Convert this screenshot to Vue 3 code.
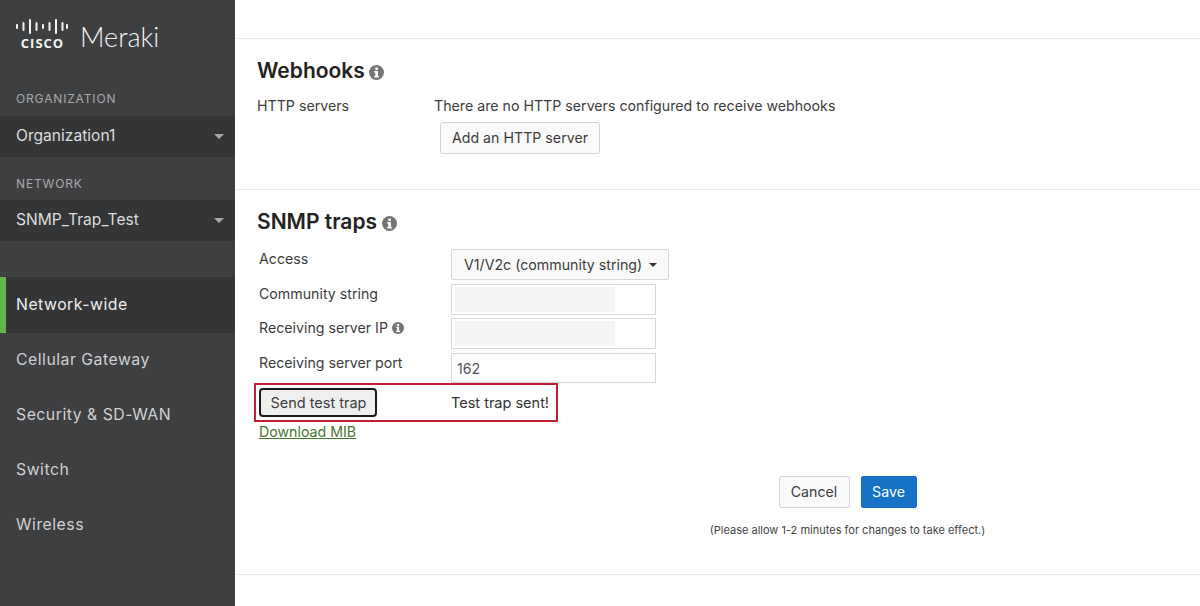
<script setup>
const navItems = ['Network-wide', 'Cellular Gateway', 'Security & SD-WAN', 'Switch', 'Wireless']
const ciscoBars = [
  { x: 0, h: 5 }, { x: 6.5, h: 9 }, { x: 13, h: 15 }, { x: 19.5, h: 9 }, { x: 26, h: 5 },
  { x: 32.5, h: 9 }, { x: 39, h: 15 }, { x: 45.5, h: 9 }, { x: 50, h: 5 }
]
</script>

<template>
  <div class="page">
    <aside class="sidebar">
      <div class="logo">
        <div class="cisco">
          <svg width="53" height="15" viewBox="0 0 53 15" class="bars">
            <rect
              v-for="bar in ciscoBars"
              :key="bar.x"
              :x="bar.x"
              :y="(15 - bar.h) / 2"
              width="2"
              :height="bar.h"
              rx="1"
              fill="#f2f2f2"
            />
          </svg>
          <span class="cisco-word">CISCO</span>
        </div>
        <span class="meraki">Meraki</span>
      </div>

      <div class="side-label org-label">ORGANIZATION</div>
      <div class="picker">Organization1<i class="picker-caret"></i></div>
      <div class="side-label net-label">NETWORK</div>
      <div class="picker">SNMP_Trap_Test<i class="picker-caret"></i></div>

      <nav class="nav">
        <div
          v-for="(item, i) in navItems"
          :key="item"
          class="nav-item"
          :class="{ active: i === 0 }"
        >{{ item }}</div>
      </nav>
    </aside>

    <main class="main">
      <section class="section webhooks">
        <h2 class="heading">Webhooks
          <svg class="info big" viewBox="0 0 16 16"><circle cx="8" cy="8" r="8" fill="#757575"/><rect x="6.6" y="2.6" width="2.9" height="2.6" rx="0.5" fill="#fff"/><path d="M5.6 6.4h3.9v5.4h1.1v1.6H5.6v-1.6h1.1V8H5.6z" fill="#fff"/></svg>
        </h2>
        <div class="hook-row">
          <span class="hook-label">HTTP servers</span>
          <div class="hook-value">
            <div>There are no HTTP servers configured to receive webhooks</div>
            <button class="btn add-btn">Add an HTTP server</button>
          </div>
        </div>
      </section>

      <section class="section snmp">
        <h2 class="heading">SNMP traps
          <svg class="info big" viewBox="0 0 16 16"><circle cx="8" cy="8" r="8" fill="#757575"/><rect x="6.6" y="2.6" width="2.9" height="2.6" rx="0.5" fill="#fff"/><path d="M5.6 6.4h3.9v5.4h1.1v1.6H5.6v-1.6h1.1V8H5.6z" fill="#fff"/></svg>
        </h2>
        <div class="form">
          <div class="form-row access-row">
            <span class="form-label">Access</span>
            <div class="select">V1/V2c (community string)<i class="select-caret"></i></div>
          </div>
          <div class="form-row">
            <span class="form-label">Community string</span>
            <div class="input"><div class="redacted"></div></div>
          </div>
          <div class="form-row ip-row">
            <span class="form-label">Receiving server IP
              <svg class="info small" viewBox="0 0 16 16"><circle cx="8" cy="8" r="8" fill="#757575"/><rect x="6.6" y="2.6" width="2.9" height="2.6" rx="0.5" fill="#fff"/><path d="M5.6 6.4h3.9v5.4h1.1v1.6H5.6v-1.6h1.1V8H5.6z" fill="#fff"/></svg>
            </span>
            <div class="input"><div class="redacted"></div></div>
          </div>
          <div class="form-row port-row">
            <span class="form-label">Receiving server port</span>
            <div class="input port">162</div>
          </div>
          <div class="form-row trap-row">
            <div class="trap-cell"><button class="trap-btn">Send test trap</button></div>
            <span class="trap-sent">Test trap sent!</span>
            <div class="highlight"></div>
          </div>
          <a class="mib">Download MIB</a>
        </div>

        <div class="actions">
          <div class="action-btns">
            <button class="btn cancel">Cancel</button>
            <button class="btn save">Save</button>
          </div>
          <p class="note">(Please allow 1-2 minutes for changes to take effect.)</p>
        </div>
      </section>
    </main>
  </div>
</template>

<style>
html, body {
  margin: 0;
  background: #fff;
}
</style>

<style scoped>
.page {
  display: flex;
  width: 1200px;
  height: 606px;
  overflow: hidden;
  font-family: Inter, "Liberation Sans", sans-serif;
  color: #3c3c3c;
  font-size: 14px;
}

.sidebar {
  width: 235px;
  flex: none;
  background: #3e3f41;
  color: #e4e4e4;
}

.logo {
  display: flex;
  align-items: flex-start;
  height: 88px;
  padding: 19px 0 0 16px;
  box-sizing: border-box;
}

.cisco {
  width: 53px;
  display: flex;
  flex-direction: column;
  align-items: center;
}

.bars {
  display: block;
}

.cisco-word {
  font-family: "Open Sans", "Liberation Sans", sans-serif;
  font-weight: 700;
  font-size: 13px;
  line-height: 12px;
  letter-spacing: 1px;
  color: #f5f5f5;
  margin-top: 3px;
}

.meraki {
  font-family: Lato, "Liberation Sans", sans-serif;
  font-weight: 300;
  font-size: 27px;
  line-height: 34px;
  margin-left: 11px;
  margin-top: 1px;
  color: #f2f2f2;
}

.side-label {
  font-size: 12px;
  line-height: 16px;
  letter-spacing: 0.85px;
  color: #a9a9a9;
  padding-left: 16px;
}

.org-label {
  margin-top: 3px;
  margin-bottom: 9px;
}

.net-label {
  margin-top: 19px;
  margin-bottom: 8px;
}

.picker {
  position: relative;
  height: 41px;
  line-height: 39px;
  background: #343537;
  padding-left: 16px;
  font-size: 15.6px;
  color: #dcdcdc;
}

.picker-caret {
  position: absolute;
  right: 11px;
  top: 18px;
  border-left: 5.5px solid transparent;
  border-right: 5.5px solid transparent;
  border-top: 5px solid #a8a8a8;
}

.nav {
  margin-top: 36px;
}

.nav-item {
  height: 55px;
  line-height: 54px;
  padding-left: 16px;
  font-size: 15.8px;
  letter-spacing: 0.5px;
  color: #d0d0d0;
}

.nav-item.active {
  height: 56px;
  line-height: 55px;
  background: #343537;
  color: #eee;
  box-shadow: inset 6px 0 0 #62b64c;
}

.main {
  flex: 1;
  min-width: 0;
  padding-top: 38px;
}

.section {
  border-top: 1px solid #ececec;
  padding-left: 22px;
  box-sizing: border-box;
}

.webhooks {
  height: 151px;
}

.snmp {
  height: 386px;
  border-bottom: 1px solid #ececec;
}

.heading {
  display: flex;
  align-items: center;
  margin: 0;
  font-family: Inter, sans-serif;
  font-weight: 600;
  font-size: 21px;
  line-height: 28px;
  color: #222;
}

.webhooks .heading {
  margin-top: 18px;
}

.snmp .heading {
  margin-top: 18px;
}

.info {
  flex: none;
  display: inline-block;
}

.info.big {
  width: 15px;
  height: 15px;
  margin-left: 4.5px;
  margin-top: 2px;
}

.info.small {
  width: 12px;
  height: 12px;
  margin-left: 0;
  vertical-align: -1px;
}

.hook-row {
  display: flex;
  margin-top: 11px;
  font-size: 14.2px;
  line-height: 20px;
}

.hook-label {
  width: 177px;
}

.hook-value {
  display: flex;
  flex-direction: column;
  align-items: flex-start;
}

.btn {
  font-family: inherit;
  font-size: 14.2px;
  box-sizing: border-box;
  border: 1px solid #d5d5d5;
  border-radius: 2px;
  background: #fafafa;
  color: #3c3c3c;
  padding: 0 0 2px;
}

.add-btn {
  width: 160px;
  height: 32px;
  margin: 6px 0 0 6px;
}

.form {
  margin-top: 13px;
  margin-left: 2px;
  font-size: 14.2px;
}

.form-row {
  display: flex;
  align-items: flex-start;
  margin-bottom: 3px;
  position: relative;
}

.access-row,
.ip-row {
  margin-bottom: 4px;
}

.form-label {
  width: 192px;
  flex: none;
  line-height: 20px;
}

.select {
  width: 218px;
  height: 31px;
  box-sizing: border-box;
  border: 1px solid #d5d5d5;
  border-radius: 2px;
  background: #fafafa;
  line-height: 29px;
  padding-left: 12px;
  display: flex;
  align-items: center;
}

.select-caret {
  margin-left: 7px;
  border-left: 4px solid transparent;
  border-right: 4px solid transparent;
  border-top: 4px solid #333;
}

.input {
  width: 205px;
  height: 31px;
  box-sizing: border-box;
  border: 1px solid #d8d8d8;
  padding: 2px 3px;
  background: #fff;
}

.redacted {
  width: 160px;
  height: 25px;
  background: #f4f4f4;
}

.port {
  padding: 6px 5px;
  line-height: 17px;
  color: #555;
  height: 30px;
}

.port-row {
  margin-bottom: 5px;
}

.trap-row {
  align-items: center;
  height: 29px;
  margin-bottom: 5px;
}

.trap-cell {
  width: 192px;
  flex: none;
}

.trap-btn {
  width: 118px;
  height: 29px;
  box-sizing: border-box;
  border: 2px solid #1c1c1c;
  border-radius: 4px;
  background: #efefef;
  font-family: inherit;
  font-size: 14.5px;
  color: #3c3c3c;
  padding: 0 0 0 1px;
}

.trap-sent {
  color: #333;
  font-size: 14.5px;
}

.highlight {
  position: absolute;
  left: -5px;
  top: -5px;
  width: 304px;
  height: 39px;
  box-sizing: border-box;
  border: 2px solid #bf2133;
}

.mib {
  display: block;
  width: max-content;
  font-size: 14.2px;
  line-height: 20px;
  color: #44782f;
  text-decoration: underline;
}

.actions {
  display: flex;
  flex-direction: column;
  align-items: center;
  width: 727px;
  margin-top: 34px;
  margin-left: 227px;
}

.action-btns {
  display: flex;
  gap: 11px;
}

.cancel {
  width: 71px;
  height: 32px;
}

.save {
  width: 56px;
  height: 32px;
  background: #1572c6;
  border-color: #1572c6;
  color: #fff;
}

.note {
  margin: 15px 0 0;
  font-size: 11px;
  line-height: 14px;
  color: #444;
}
</style>
